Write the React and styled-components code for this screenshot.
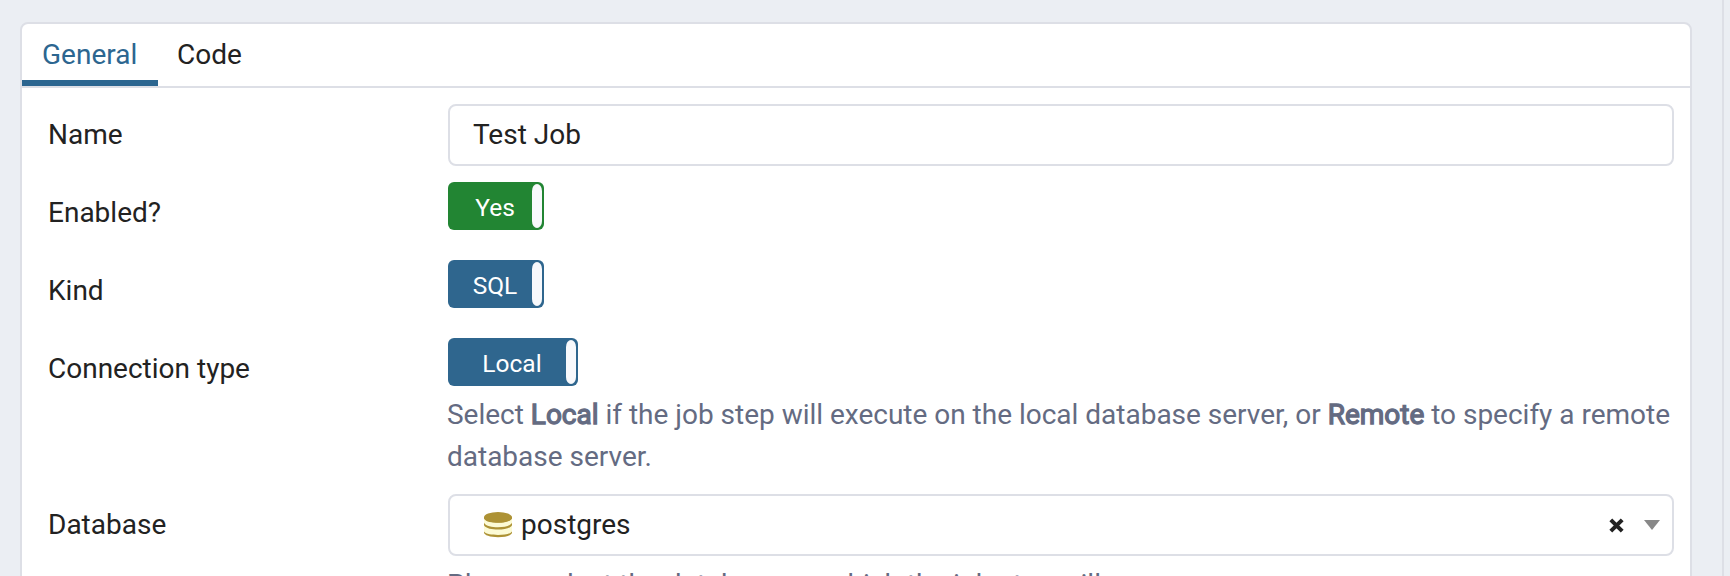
import React from 'react';
import styled, { createGlobalStyle } from 'styled-components';

const GlobalStyle = createGlobalStyle`
  *, *::before, *::after { box-sizing: border-box; }
  body {
    margin: 0;
    overflow: hidden;
    background: #ebeef3;
    color: #222222;
    font: 28px/42px Roboto, "Open Sans", sans-serif;
  }
`;

const Page = styled.div`
  display: flex;
  height: 576px;
  overflow: hidden;
`;

const Main = styled.div`
  flex: 1;
  padding: 22px 30px 0 20px;
`;

const Gutter = styled.div`
  width: 8px;
  border-left: 2px solid #dddfe6;
`;

const Panel = styled.section`
  height: 640px;
  background: #fff;
  border: 2px solid #dddfe6;
  border-radius: 8px;
  overflow: hidden;
`;

const Tabs = styled.nav`
  display: flex;
  height: 64px;
  border-bottom: 2px solid #dddfe6;
`;

const Tab = styled.button`
  height: 62px;
  width: ${p => p.$width};
  padding: 10px 19px 4px;
  border: 0;
  border-bottom: 6px solid ${p => (p.$active ? '#2c6690' : 'transparent')};
  background: none;
  color: ${p => (p.$active ? '#2c6690' : '#222222')};
  font: inherit;
  text-align: left;

  &:first-child { padding-left: 20px; }
`;

const Form = styled.div`
  display: flex;
  flex-direction: column;
  gap: 16px;
  padding: 16px;
`;

const Field = styled.div`
  display: grid;
  grid-template-columns: 410px 1fr;
  min-height: 62px;
`;

const Label = styled.label`
  padding: 10px 10px 0;
`;

const Control = styled.div`
  min-width: 0;
`;

const TextInput = styled.input`
  display: block;
  width: 100%;
  height: 62px;
  padding: 0 23px 2px;
  border: 2px solid #dddfe6;
  border-radius: 8px;
  outline: 0;
  background: #fff;
  color: #222222;
  font: inherit;
`;

const Toggle = styled.div`
  display: flex;
  align-items: center;
  width: ${p => p.$width};
  height: 48px;
  padding: 2px;
  border-radius: 6px;
  background: ${p => p.$color};
  color: #fff;
  font-size: 24.5px;
  line-height: 36px;
`;

const ToggleText = styled.span`
  flex: 1;
  padding: 4px 0 0 8px;
  text-align: center;
`;

const ToggleHandle = styled.span`
  width: 10px;
  height: 44px;
  border-radius: 5px / 7px;
  background: #f8f9fc;
`;

const Help = styled.p`
  margin: 8px -10px 0 -1px;
  color: #646b82;
  letter-spacing: -0.01px;

  b {
    font-weight: 400;
    -webkit-text-stroke: 1.3px currentColor;
  }
`;

const Select = styled.div`
  display: flex;
  align-items: center;
  height: 62px;
  padding: 0 12px 0 34px;
  border: 2px solid #dddfe6;
  border-radius: 8px;
`;

const SelectText = styled.span`
  flex: 1;
  margin-left: 9px;
`;

const Caret = styled.svg`
  margin-left: 20px;
`;

function DatabaseIcon() {
  return (
    <svg width="28" height="26" viewBox="0 0 28 26">
      <path d="M0 5v15.500c0 2.700 6.300 4.700 14 4.700s14-2 14-4.700V5z" fill="#ad9235" />
      <path d="M0 6.500C2 10 8 10.800 14 10.800S26 10 28 6.500v4.300c-2 3.500-8 4.500-14 4.500S2 14.300 0 10.800zM0 13.300c2 3.400 8 4.300 14 4.300s12-.9 14-4.300v6.200c-2 2.700-8 3.400-14 3.400S2 22.200 0 19.500z" fill="#fcfbd5" />
      <ellipse cx="14" cy="5.300" rx="14" ry="5.200" fill="#ad9235" />
    </svg>
  );
}

export default function App() {
  return (
    <>
      <GlobalStyle />
      <Page>
        <Main>
          <Panel>
            <Tabs>
              <Tab $active $width="136px">General</Tab>
              <Tab $width="104px">Code</Tab>
            </Tabs>
            <Form>
              <Field>
                <Label>Name</Label>
                <Control><TextInput defaultValue="Test Job" /></Control>
              </Field>
              <Field>
                <Label>Enabled?</Label>
                <Control>
                  <Toggle $width="96px" $color="#228533"><ToggleText>Yes</ToggleText><ToggleHandle /></Toggle>
                </Control>
              </Field>
              <Field>
                <Label>Kind</Label>
                <Control>
                  <Toggle $width="96px" $color="#2f668e"><ToggleText>SQL</ToggleText><ToggleHandle /></Toggle>
                </Control>
              </Field>
              <Field>
                <Label>Connection type</Label>
                <Control>
                  <Toggle $width="130px" $color="#2f668e"><ToggleText>Local</ToggleText><ToggleHandle /></Toggle>
                  <Help>
                    Select <b>Local</b> if the job step will execute on the local database server, or <b>Remote</b> to specify a remote database server.
                  </Help>
                </Control>
              </Field>
              <Field>
                <Label>Database</Label>
                <Control>
                  <Select>
                    <DatabaseIcon />
                    <SelectText>postgres</SelectText>
                    <svg width="15" height="15" viewBox="0 0 15 15">
                      <path d="M1.800 1.800l11.400 11.400M13.200 1.800L1.800 13.200" stroke="#222222" strokeWidth="4" />
                    </svg>
                    <Caret width="16" height="10" viewBox="0 0 16 10">
                      <path d="M0 0h16L8 10z" fill="#888888" />
                    </Caret>
                  </Select>
                  <Help>Please select the database on which the job step will run.</Help>
                </Control>
              </Field>
            </Form>
          </Panel>
        </Main>
        <Gutter />
      </Page>
    </>
  );
}
